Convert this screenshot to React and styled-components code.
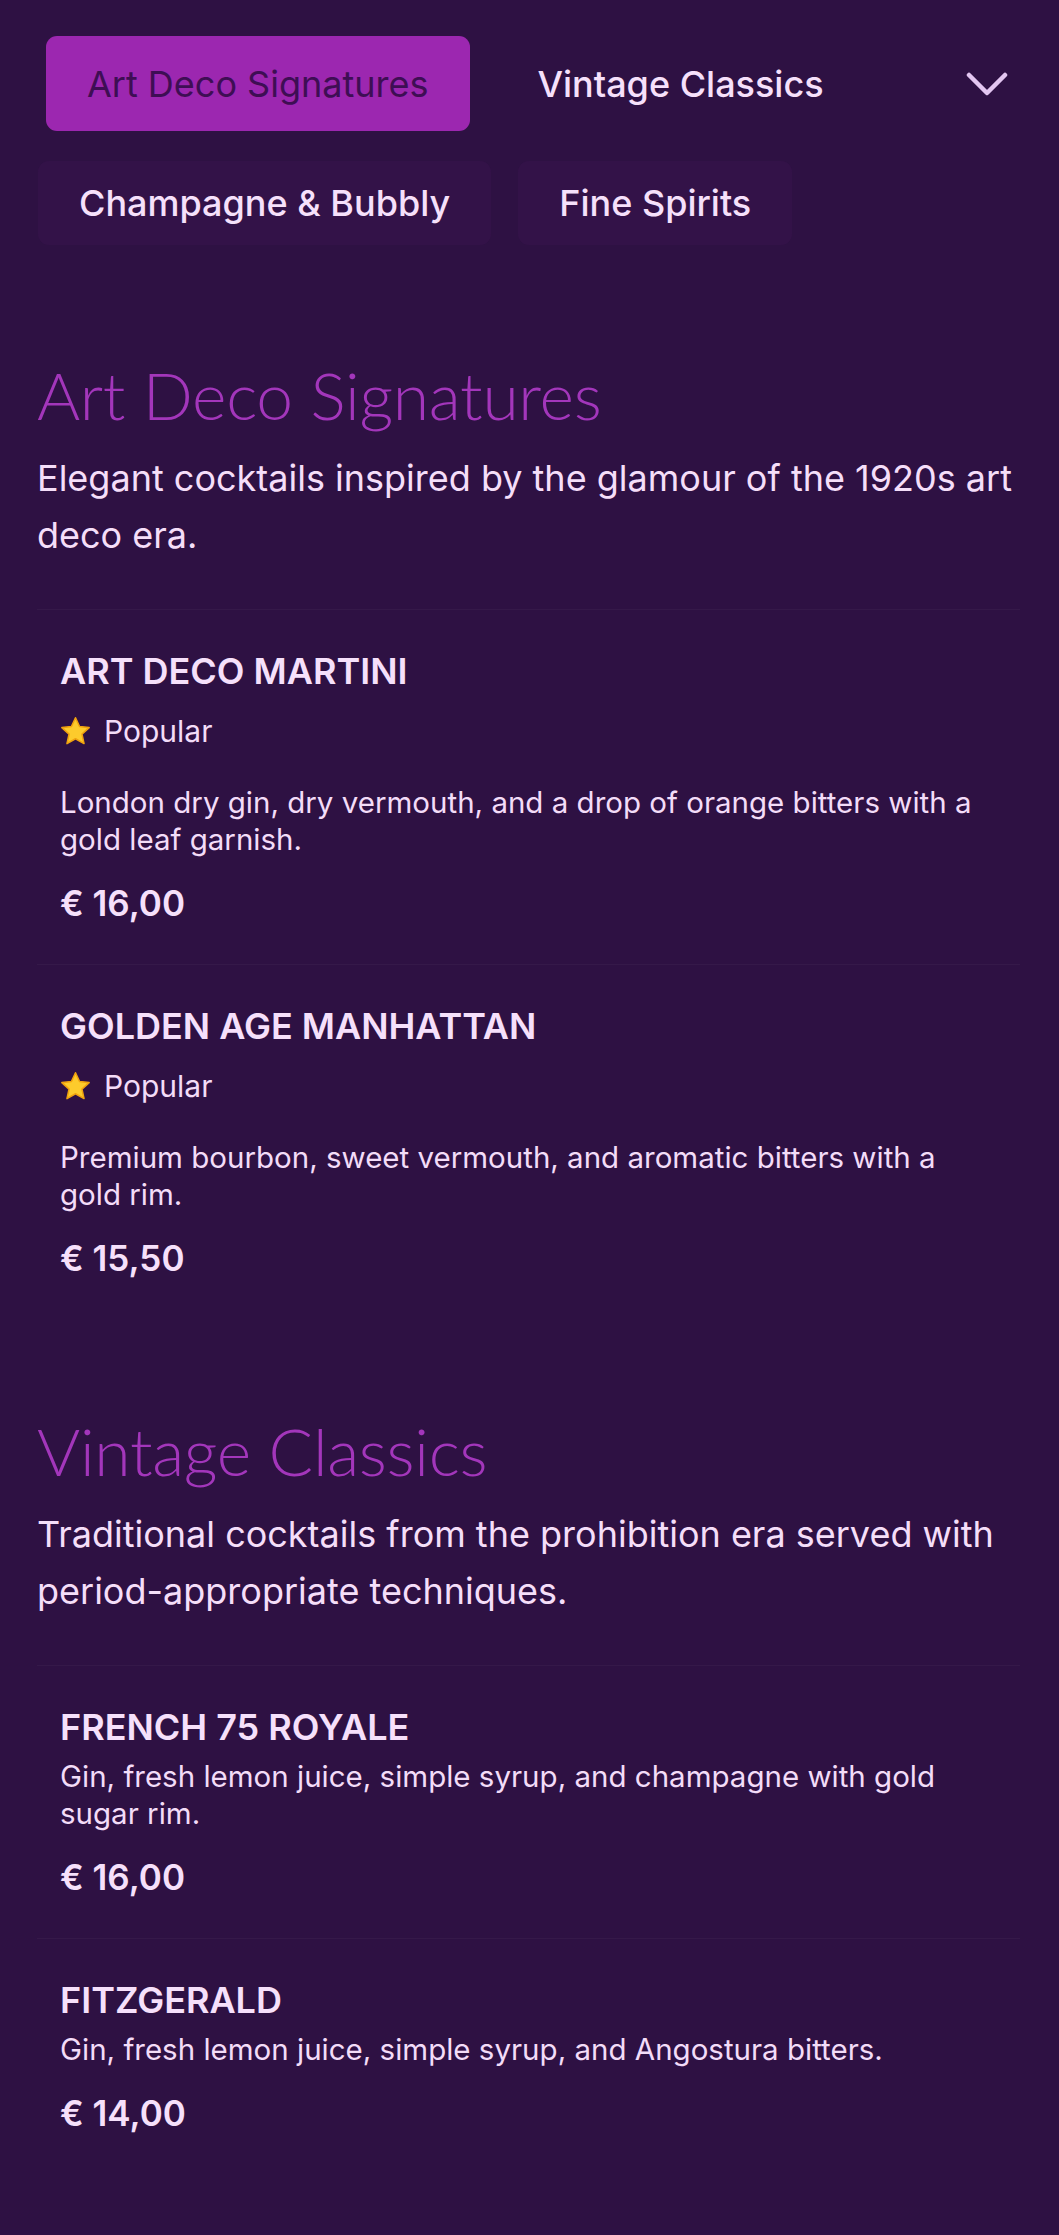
import React from "react";
import styled, { createGlobalStyle } from "styled-components";

const Global = createGlobalStyle`
  html, body { margin: 0; padding: 0; background: #2e1143; }
  body { font-family: Inter, "Noto Sans", sans-serif; color: #f5def9; }
  * { box-sizing: border-box; }
`;

const Page = styled.div`
  width: 1059px;
  min-height: 2235px;
  background: #2e1143;
  padding-bottom: 70px;
`;

const Header = styled.header`
  display: flex;
  flex-direction: column;
  gap: 30px;
  padding-top: 36px;
`;

const TopRow = styled.div`
  display: flex;
  align-items: center;
  padding: 0 48px 0 46px;
  gap: 27px;
`;

const MoreRow = styled.div`
  display: flex;
  gap: 27px;
  padding-left: 38px;
`;

const Tab = styled.button`
  display: flex;
  align-items: center;
  justify-content: center;
  height: ${(p) => (p.$tall ? 95 : 84)}px;
  padding: 0 41px;
  border: none;
  border-radius: 11px;
  font-family: Inter, "Noto Sans", sans-serif;
  font-size: 36px;
  font-weight: ${(p) => (p.$active ? 400 : 500)};
  color: ${(p) => (p.$active ? "#3e0e54" : "#f6e0fb")};
  background: ${(p) =>
    p.$active ? "#9c27b0" : p.$plain ? "transparent" : "rgba(156, 39, 176, 0.05)"};
  white-space: nowrap;
  cursor: pointer;
`;

const Spacer = styled.div`
  flex: 1;
`;

const ChevronButton = styled.button`
  display: flex;
  align-items: center;
  justify-content: center;
  width: 48px;
  height: 48px;
  padding: 0;
  border: none;
  background: transparent;
  cursor: pointer;
`;

const Section = styled.section`
  padding: ${(p) => (p.$first ? 110 : 92)}px 39px 0 37px;
`;

const SectionTitle = styled.h2`
  margin: 0 0 16px;
  font-family: Lato, "Open Sans", sans-serif;
  font-weight: 300;
  font-size: 66px;
  line-height: 79px;
  color: #a336bb;
  letter-spacing: -0.3px;
`;

const SectionDesc = styled.p`
  margin: 0 0 45px;
  font-size: 36px;
  line-height: 57px;
  color: #f5def9;
`;

const Item = styled.article`
  border-top: 1px solid rgba(255, 255, 255, 0.035);
  padding: 39px 24px 41px 23px;
`;

const ItemTitle = styled.h3`
  margin: 0;
  font-size: 36px;
  font-weight: 600;
  line-height: 45px;
  color: #f6e0fb;
`;

const Badge = styled.div`
  display: flex;
  align-items: center;
  gap: 13px;
  margin: 19px 0 35px;
  font-size: 30px;
  line-height: 36px;
  color: #f3dcf8;
`;

const ItemDesc = styled.p`
  margin: ${(p) => (p.$afterBadge ? 0 : 8)}px 0 0;
  font-size: 29.5px;
  line-height: 37px;
  color: #f3dcf8;
`;

const Price = styled.div`
  margin-top: 25px;
  font-size: 35px;
  font-weight: 600;
  line-height: 40px;
  color: #f6e0fb;
`;

const Star = () => (
  <svg width="31" height="30" viewBox="0 0 32 31">
    <path
      d="M16 1.8l4.2 9.1 9.9 1.1-7.4 6.7 2.1 9.8L16 23.5l-8.8 5 2.1-9.8-7.4-6.7 9.9-1.1z"
      fill="#fdcb2c"
      stroke="#f0a20f"
      strokeWidth="1.6"
      strokeLinejoin="round"
    />
  </svg>
);

const Chevron = () => (
  <svg width="42" height="26" viewBox="0 0 42 26">
    <polyline
      points="3,4 21,22 39,4"
      fill="none"
      stroke="#e3c6f1"
      strokeWidth="4.5"
      strokeLinecap="round"
      strokeLinejoin="round"
    />
  </svg>
);

const sections = [
  {
    title: "Art Deco Signatures",
    desc: "Elegant cocktails inspired by the glamour of the 1920s art deco era.",
    items: [
      {
        name: "ART DECO MARTINI",
        popular: true,
        desc: "London dry gin, dry vermouth, and a drop of orange bitters with a gold leaf garnish.",
        price: "€ 16,00",
      },
      {
        name: "GOLDEN AGE MANHATTAN",
        popular: true,
        desc: "Premium bourbon, sweet vermouth, and aromatic bitters with a gold rim.",
        price: "€ 15,50",
      },
    ],
  },
  {
    title: "Vintage Classics",
    desc: "Traditional cocktails from the prohibition era served with period-appropriate techniques.",
    items: [
      {
        name: "FRENCH 75 ROYALE",
        desc: "Gin, fresh lemon juice, simple syrup, and champagne with gold sugar rim.",
        price: "€ 16,00",
      },
      {
        name: "FITZGERALD",
        desc: "Gin, fresh lemon juice, simple syrup, and Angostura bitters.",
        price: "€ 14,00",
      },
    ],
  },
];

export default function App() {
  return (
    <Page>
      <Global />
      <Header>
        <TopRow>
          <Tab $active $tall>Art Deco Signatures</Tab>
          <Tab $tall $plain>Vintage Classics</Tab>
          <Spacer />
          <ChevronButton aria-label="More categories">
            <Chevron />
          </ChevronButton>
        </TopRow>
        <MoreRow>
          <Tab>Champagne &amp; Bubbly</Tab>
          <Tab>Fine Spirits</Tab>
        </MoreRow>
      </Header>
      {sections.map((s, si) => (
        <Section key={s.title} $first={si === 0}>
          <SectionTitle>{s.title}</SectionTitle>
          <SectionDesc>{s.desc}</SectionDesc>
          {s.items.map((it) => (
            <Item key={it.name}>
              <ItemTitle>{it.name}</ItemTitle>
              {it.popular && (
                <Badge>
                  <Star />
                  <span>Popular</span>
                </Badge>
              )}
              <ItemDesc $afterBadge={it.popular}>{it.desc}</ItemDesc>
              <Price>{it.price}</Price>
            </Item>
          ))}
        </Section>
      ))}
    </Page>
  );
}
